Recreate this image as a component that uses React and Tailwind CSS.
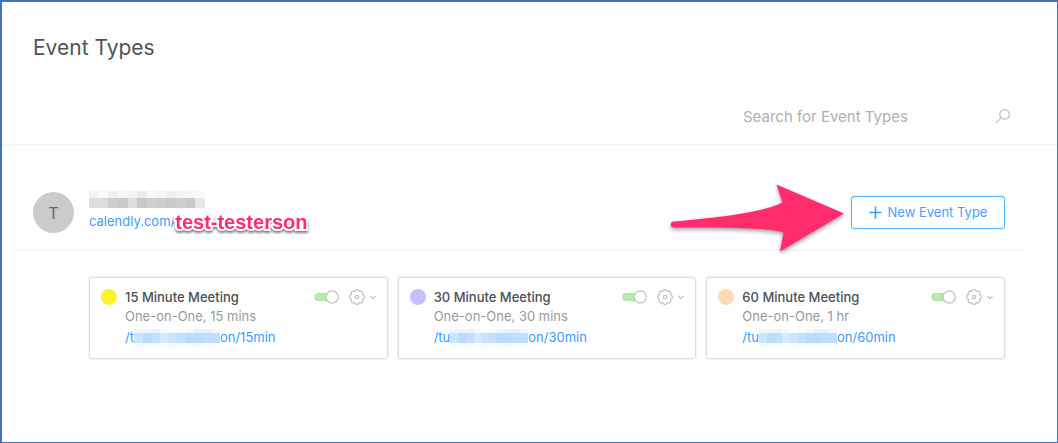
import React from "react";

const EVENTS = [
  {
    id: "15min",
    title: "15 Minute Meeting",
    detail: "One-on-One, 15 mins",
    prefix: "/t",
    suffix: "on/15min",
    dot: "bg-[#fff12e]",
    mask: "w-[86px]",
  },
  {
    id: "30min",
    title: "30 Minute Meeting",
    detail: "One-on-One, 30 mins",
    prefix: "/tu",
    suffix: "on/30min",
    dot: "bg-[#c5c1ff]",
    mask: "w-[78px]",
  },
  {
    id: "60min",
    title: "60 Minute Meeting",
    detail: "One-on-One, 1 hr",
    prefix: "/tu",
    suffix: "on/60min",
    dot: "bg-[#ffdab5]",
    mask: "w-[78px]",
  },
];

const NAME_TOP = ["#f3f3f4", "#fafafa", "#f1f1f2", "#f7f7f7", "#f3f3f3", "#e9ebec", "#f8f8f8", "#f5f5f5", "#efefef", "#f1f3f5", "#f6f6f6", "#f9f9f9"];
const NAME_BOTTOM = ["#dedddc", "#dcdcdd", "#cfcecd", "#cbcaca", "#dddcdb", "#c6c9cd", "#cfcfcf", "#cfcdcb", "#cbc8c7", "#d0cecd", "#c5c9d0", "#e6e6e6"];
const LINK_TOP = ["#eaf5ff", "#eef7ff", "#e6f3ff", "#f4faff", "#ffffff", "#fafdff", "#f0f8ff", "#e2f1ff", "#e4f2ff", "#f0f8ff"];
const LINK_MAIN = ["#cae5fe", "#b9dcfe", "#c3dfff", "#d6ebff", "#cbe3ff", "#bfe0ff", "#b9ddff", "#bbdcff", "#c0deff", "#c0deff"];
const LINK_BOTTOM = ["#f3f9ff", "#f5faff", "#f6fafe", "#f8fbff", "#f4f9ff", "#f6fbff", "#f5faff", "#f3f9ff", "#f6fbff", "#f8fcff"];

function Mosaic({ rows, className }) {
  return (
    <span aria-hidden="true" className={"flex flex-col " + className}>
      {rows.map(([colors, height], r) => (
        <span key={r} className={"flex " + height}>
          {colors.map((color, i) => (
            <span key={i} className="flex-1" style={{ backgroundColor: color }} />
          ))}
        </span>
      ))}
    </span>
  );
}

function SearchIcon() {
  return (
    <svg width="16" height="16" viewBox="0 0 16 16" fill="none" stroke="#c4c4c4" strokeWidth="1.3" strokeLinecap="round">
      <circle cx="9.6" cy="6.4" r="4.800" />
      <path d="M6.200 9.8 1.400 14.6" />
    </svg>
  );
}

function Toggle({ label }) {
  return (
    <label className="flex cursor-pointer">
      <input type="checkbox" role="switch" defaultChecked aria-label={label} className="sr-only" />
      <svg width="26" height="16" viewBox="0 0 26 16" fill="none">
        <rect x="1" y="4.7" width="18" height="6.6" rx="2.6" fill="#b9eab0" stroke="#a2dc9b" />
        <circle cx="18.2" cy="8" r="6.1" fill="#fff" stroke="#c4c4c4" strokeWidth="1.3" />
      </svg>
    </label>
  );
}

function GearMenu({ label }) {
  return (
    <button type="button" aria-label={label} className="flex cursor-pointer items-center gap-1">
      <svg width="18" height="18" viewBox="0 0 18 18" fill="none" stroke="#c0c0c0" strokeWidth="1.2" strokeLinejoin="round">
        <path d="M6.7 3.46A2.35 2.35 0 0 1 11.3 3.46A2.35 2.35 0 0 1 14.54 6.7A2.35 2.35 0 0 1 14.54 11.3A2.35 2.35 0 0 1 11.3 14.54A2.35 2.35 0 0 1 6.7 14.54A2.35 2.35 0 0 1 3.46 11.3A2.35 2.35 0 0 1 3.46 6.7A2.35 2.35 0 0 1 6.7 3.46Z" />
        <circle cx="9" cy="9" r="1.7" />
      </svg>
      <svg width="6" height="5" viewBox="0 0 6 5" fill="none" stroke="#c4c4c4" strokeWidth="1.2">
        <path d="M.5 1 3 3.5 5.5 1" />
      </svg>
    </button>
  );
}

function Arrow() {
  return (
    <svg
      aria-hidden="true"
      className="pointer-events-none absolute top-[-12px] right-full mr-[6px] drop-shadow-[0_2px_2px_rgba(0,0,0,0.4)]"
      width="175"
      height="70"
      viewBox="0 0 175 70"
    >
      <path
        d="M106.5 .5 174 29.5 110 67.5 113.500 48.500C100 44 60 43.500 3.500 43.500 -.3 43.500 -.3 37.500 3.500 37.500C50 33.500 92 28.500 112.500 18.500Z"
        fill="#ff2d6c"
      />
    </svg>
  );
}

function EventCard({ event }) {
  return (
    <article className="flex flex-1 gap-2 rounded-[3px] border border-[#dedede] px-[11px] pt-[10px] pb-2 shadow-[0_0_1px_1px_#f1f1f1]">
      <span className={"mt-px size-4 shrink-0 rounded-full " + event.dot} />
      <div className="min-w-0 flex-1">
        <div className="flex items-center justify-between">
          <h2 className="text-[13px] leading-[18px] font-medium text-[#4a4f55]">{event.title}</h2>
          <div className="flex items-center gap-2">
            <Toggle label={"Enable " + event.title} />
            <GearMenu label={"Options for " + event.title} />
          </div>
        </div>
        <p className="text-[13px] leading-[20px] text-[#999]">{event.detail}</p>
        <a href={"#" + event.id} className="flex h-6 items-center text-[13px] text-[#3b99fc]">
          {event.prefix}
          <Mosaic
            className={event.mask}
            rows={[
              [LINK_TOP, "h-[4px]"],
              [LINK_MAIN, "h-[10px]"],
              [LINK_BOTTOM, "h-[4px]"],
            ]}
          />
          {event.suffix}
        </a>
      </div>
    </article>
  );
}

export default function App() {
  return (
    <div className="min-h-screen border border-t-2 border-l-2 border-[#4472c4] bg-white font-['Inter',sans-serif]">
      <header className="border-b-2 border-[#f1f7fb] pt-8 pr-[46px] pb-4 pl-[31px]">
        <h1 className="text-[21px] leading-[28px] text-[#4f5459]">Event Types</h1>
        <div className="mt-[42px] flex justify-end">
          <label className="flex w-[268px] items-center">
            <input
              type="search"
              aria-label="Search for Event Types"
              placeholder="Search for Event Types"
              className="h-6 min-w-0 flex-1 text-[15px] text-[#4f5459] outline-none placeholder:text-[#b0b0b0]"
            />
            <SearchIcon />
          </label>
        </div>
      </header>

      <main>
        <section className="mr-[31px] ml-4 flex items-center border-b-2 border-[#f1f7fb] pt-[45px] pr-[21px] pb-[15px] pl-[15px]">
          <div className="flex size-[41px] items-center justify-center rounded-full bg-[#cbcbcb] text-[16px] text-[#62676b]">T</div>
          <div className="ml-[15px]">
            <Mosaic
              className="w-[116px]"
              rows={[
                [NAME_TOP, "h-[7px]"],
                [NAME_BOTTOM, "h-[10px]"],
              ]}
            />
            <a href="#profile" className="mt-[2px] flex h-6 items-center text-[13px] text-[#3b9dfc]">
              calendly.com/
              <span className="font-['Liberation_Sans',sans-serif] text-[20px] leading-[24px] font-bold text-[#ff2d6c] drop-shadow-[0_2px_1px_rgba(0,0,0,0.5)] [paint-order:stroke_fill] [-webkit-text-stroke:4px_white]">
                test-testerson
              </span>
            </a>
          </div>
          <div className="relative ml-auto">
            <Arrow />
            <button
              type="button"
              className="flex h-[33px] w-[154px] cursor-pointer items-center justify-center gap-[6px] rounded-[3px] border border-[#4db5fb] text-[13px] text-[#4f9dfb] shadow-[0_0_1px_#4db5fb]"
            >
              <svg width="13" height="13" viewBox="0 0 13 13" stroke="#2aa3fb" strokeWidth="1.6">
                <path d="M6.500 .5V12.500M.5 6.500H12.500" />
              </svg>
              New Event Type
            </button>
          </div>
        </section>

        <section aria-label="Event types" className="flex gap-[10px] pt-[26px] pr-[52px] pb-8 pl-[87px]">
          {EVENTS.map((event) => (
            <EventCard key={event.id} event={event} />
          ))}
        </section>
      </main>
    </div>
  );
}
